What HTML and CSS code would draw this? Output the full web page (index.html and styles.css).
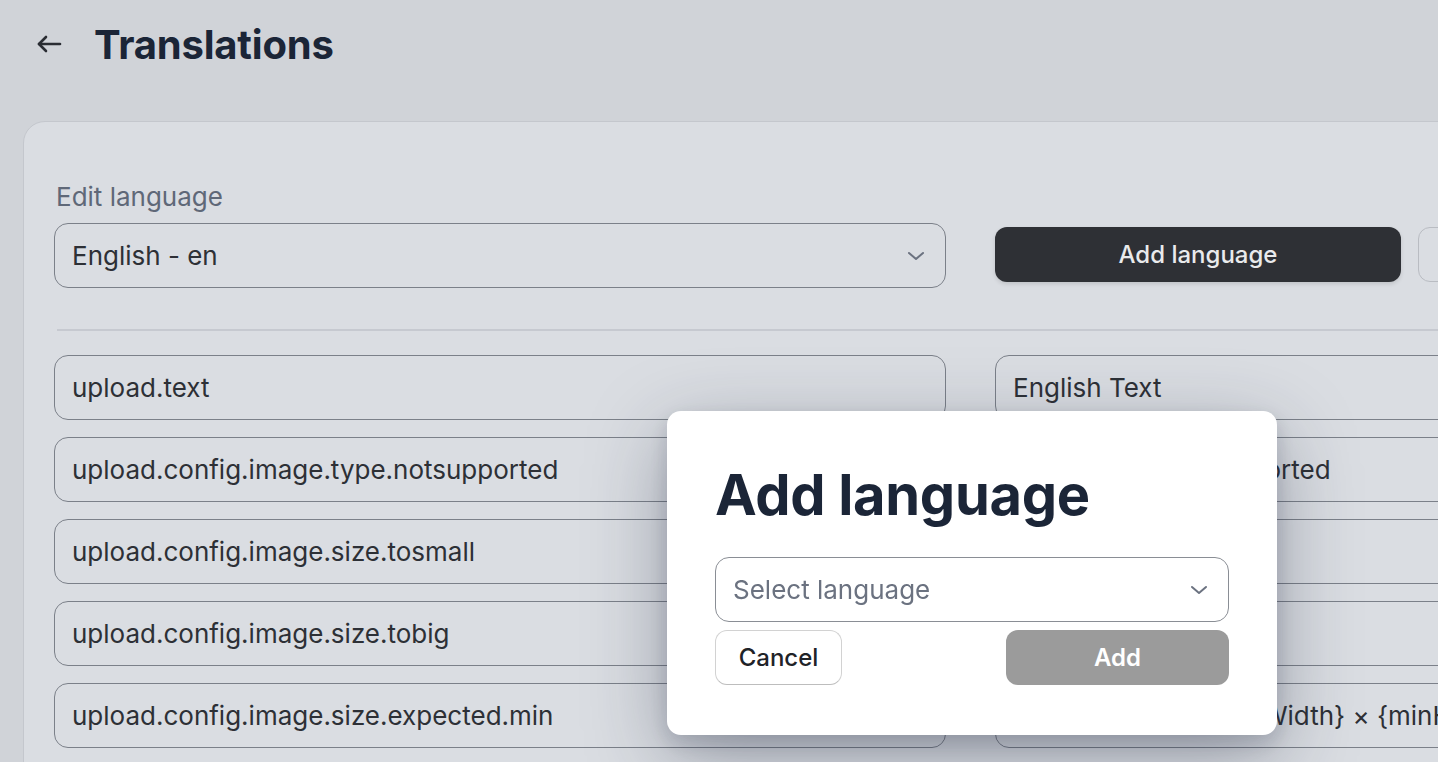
FILE: index.html
```html
<!DOCTYPE html>
<html lang="en">
<head>
<meta charset="UTF-8">
<meta name="viewport" content="width=device-width, initial-scale=1.0">
<title>Translations</title>
<link rel="stylesheet" href="styles.css">
</head>
<body>

  <header class="top-bar">
    <a class="back-link" href="#">
      <svg width="26" height="20" viewBox="0 0 26 20" fill="none" stroke="#2a2d33" stroke-width="2.6" stroke-linecap="round" stroke-linejoin="round">
        <path d="M24 10H3"/>
        <path d="M10 3L3 10L10 17"/>
      </svg>
    </a>
    <h1 class="page-title">Translations</h1>
  </header>

  <section class="card">
    <div class="grid">
      <div class="field">
        <label class="field-label">Edit language</label>
        <div class="select">
          <span>English - en</span>
          <svg class="chevron" width="18" height="10" viewBox="0 0 18 10" fill="none" stroke="#6b7280" stroke-width="2" stroke-linecap="round" stroke-linejoin="round"><path d="M2 2L9 8L16 2"/></svg>
        </div>
      </div>
      <div class="actions">
        <button class="btn btn-dark">Add language</button>
        <button class="btn btn-outline">Remove language</button>
      </div>
    </div>

    <hr class="divider">

    <div class="grid rows">
      <div class="input">upload.text</div>
      <div class="input">English Text</div>

      <div class="input">upload.config.image.type.notsupported</div>
      <div class="input">Image type not supported</div>

      <div class="input">upload.config.image.size.tosmall</div>
      <div class="input">Image is too small</div>

      <div class="input">upload.config.image.size.tobig</div>
      <div class="input">Image is too big</div>

      <div class="input">upload.config.image.size.expected.min</div>
      <div class="input">Minimum width {minWidth} × {minHeight}</div>
    </div>
  </section>

  <div class="modal">
    <h2 class="modal-title">Add language</h2>
    <div class="select select-light">
      <span class="placeholder">Select language</span>
      <svg class="chevron" width="18" height="10" viewBox="0 0 18 10" fill="none" stroke="#6b7280" stroke-width="2" stroke-linecap="round" stroke-linejoin="round"><path d="M2 2L9 8L16 2"/></svg>
    </div>
    <div class="modal-buttons">
      <button class="btn btn-cancel">Cancel</button>
      <button class="btn btn-add">Add</button>
    </div>
  </div>

</body>
</html>
```

FILE: styles.css
```css
* {
  box-sizing: border-box;
}

html, body {
  margin: 0;
  height: 100%;
  overflow: hidden;
}

body {
  background-color: #d0d3d8;
  font-family: "Inter", "Noto Sans", sans-serif;
  color: #2d3036;
}

/* Cabecera */
.top-bar {
  display: flex;
  align-items: center;
  height: 88px;
  padding-left: 36px;
}

.back-link {
  display: flex;
  width: 58px;
}

.page-title {
  margin: 0;
  font-size: 40px;
  font-weight: 700;
  color: #1b2537;
  letter-spacing: -0.2px;
}

/* Tarjeta principal */
.card {
  margin: 33px 0 0 23px;
  width: 1895px;
  padding: 59px 30px 40px 30px;
  background-color: #dadde2;
  border: 1px solid #c4c7cd;
  border-radius: 22px;
}

.grid {
  display: grid;
  grid-template-columns: 892px 892px;
  column-gap: 49px;
}

.field-label {
  display: block;
  font-size: 26px;
  line-height: 32px;
  color: #5f6878;
  margin-left: 2px;
  margin-bottom: 10px;
}

.select {
  display: flex;
  align-items: center;
  justify-content: space-between;
  height: 65px;
  padding: 0 20px 0 17px;
  border: 1px solid #7b8089;
  border-radius: 14px;
  font-size: 26px;
}

.actions {
  display: flex;
  align-self: end;
  gap: 17px;
  margin-bottom: 6px;
}

.btn {
  font-family: inherit;
  font-size: 24px;
  font-weight: 500;
  height: 55px;
  border-radius: 12px;
  cursor: pointer;
}

.btn-dark {
  width: 406px;
  background-color: #2e3035;
  color: #e9eaec;
  border: none;
  box-shadow: 0 2px 4px rgba(0, 0, 0, 0.12);
}

.btn-outline {
  flex: 1;
  background-color: #dadde2;
  color: #2d3036;
  border: 1px solid #b9bcc2;
}

.divider {
  border: none;
  height: 2px;
  background-color: #c6c9d0;
  margin: 41px 0 24px 3px;
}

.rows {
  row-gap: 17px;
}

.input {
  height: 65px;
  display: flex;
  align-items: center;
  padding-left: 17px;
  border: 1px solid #7b8089;
  border-radius: 14px;
  font-size: 26px;
  white-space: nowrap;
  overflow: hidden;
}

/* Ventana modal */
.modal {
  position: fixed;
  left: 667px;
  top: 411px;
  width: 610px;
  height: 324px;
  padding: 44px 48px 48px 48px;
  background-color: #ffffff;
  border-radius: 14px;
  box-shadow: 0 24px 80px rgba(30, 40, 60, 0.36), 0 8px 20px rgba(30, 40, 60, 0.16);
}

.modal-title {
  margin: 0 0 22px 0;
  font-size: 56px;
  line-height: 80px;
  font-weight: 700;
  color: #1b2537;
  letter-spacing: -0.3px;
}

.select-light {
  border-color: #8a8e95;
}

.placeholder {
  color: #6b7280;
}

.modal-buttons {
  display: flex;
  justify-content: space-between;
  margin-top: 8px;
}

.btn-cancel {
  width: 127px;
  background-color: #ffffff;
  color: #1f2328;
  border: 1px solid #d2d2d2;
  border-bottom-color: #bdbdbd;
}

.btn-add {
  width: 223px;
  background-color: #9b9b9b;
  color: #ffffff;
  border: none;
  font-weight: 600;
}
```
